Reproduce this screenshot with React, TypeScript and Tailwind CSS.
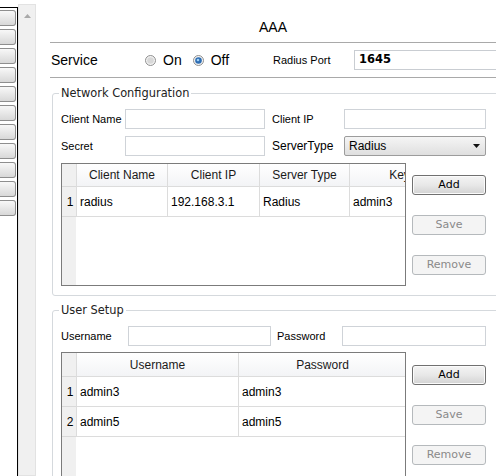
import React from "react";

type Col = { title: string; w: string };

const netCols: Col[] = [
  { title: "Client Name", w: "w-[91px]" },
  { title: "Client IP", w: "w-[92px]" },
  { title: "Server Type", w: "w-[90px]" },
  { title: "Key", w: "w-[100px]" },
];

const netRows = [["radius", "192.168.3.1", "Radius", "admin3"]];

const userCols: Col[] = [
  { title: "Username", w: "w-[162px]" },
  { title: "Password", w: "w-[168px]" },
];

const userRows = [
  ["admin3", "admin3"],
  ["admin5", "admin5"],
];

function Radio({ on }: { on?: boolean }) {
  return (
    <svg width="11" height="11" viewBox="0 0 11 11" className="shrink-0">
      <circle cx="5.5" cy="5.5" r="5" fill="#f3f3f3" stroke="#8f8f8f" />
      <circle cx="5.5" cy="5.5" r="3.3" fill={on ? "#2d6db3" : "#d8d8d8"} />
      {on && <circle cx="5" cy="5" r="1.3" fill="#9fd0f4" />}
    </svg>
  );
}

function Btn({ label, disabled }: { label: string; disabled?: boolean }) {
  return (
    <div
      className={
        disabled
          ? "flex h-[20px] w-[74px] items-center justify-center rounded-[3px] border border-[#b5b9bc] bg-[#f4f4f4] font-['DejaVu_Sans',sans-serif] text-[11px] text-[#8a8a8a]"
          : "flex h-[20px] w-[74px] items-center justify-center rounded-[3px] border border-[#707070] bg-linear-to-b from-[#f4f4f4] via-[#e8e8e8] to-[#d3d3d3] font-['DejaVu_Sans',sans-serif] text-[11px] text-black shadow-[inset_0_0_0_1px_#fbfbfb]"
      }
    >
      {label}
    </div>
  );
}

function Grid({
  cols,
  rows,
  box,
  headH,
}: {
  cols: Col[];
  rows: string[][];
  box: string;
  headH: string;
}) {
  return (
    <div className={`flex shrink-0 overflow-hidden border border-[#7b7b7b] bg-white text-[12px] ${box}`}>
      <div className="flex w-[14px] shrink-0 flex-col bg-[#f0f0f0]">
        <div className={`${headH} border-b border-[#d9d9d9]`} />
        {rows.map((_, i) => (
          <div key={i} className="flex h-[30px] items-center justify-center border-b border-[#d9d9d9] pl-[2px]">
            {i + 1}
          </div>
        ))}
      </div>
      {cols.map((c, ci) => (
        <div key={c.title} className={`flex shrink-0 flex-col ${c.w}`}>
          <div
            className={`${headH} flex items-center justify-center border-b border-l border-[#dcdcdc] bg-linear-to-b from-white to-[#f3f4f6] whitespace-nowrap text-[#1a1a1a]`}
          >
            {c.title}
          </div>
          {rows.map((r, ri) => (
            <div key={ri} className="flex h-[30px] items-center border-b border-l border-[#dcdcdc] pl-[3px] whitespace-nowrap">
              {r[ci]}
            </div>
          ))}
        </div>
      ))}
    </div>
  );
}

export default function App() {
  return (
    <div className="flex h-[476px] w-[496px] overflow-hidden bg-white font-['Liberation_Sans',Arial,sans-serif] text-black">
      {/* side strip */}
      <div className="mt-[7px] flex w-[18px] shrink-0 flex-col gap-[3px] border-t border-r border-black pt-[2px]">
        {Array.from({ length: 11 }).map((_, i) => (
          <div
            key={i}
            className="h-[16px] w-[16px] rounded-r-[3px] border border-l-0 border-[#8e8e8e] bg-linear-to-b from-[#f8f8f8] to-[#d8d8d8]"
          />
        ))}
      </div>
      {/* scrollbar */}
      <div className="mt-[4px] flex w-[18px] shrink-0 justify-center border border-[#e2e2e2] bg-[#f0f0f0] pt-[9px]">
        <svg width="7" height="4" viewBox="0 0 7 4">
          <path d="M0 4L3.5 0L7 4Z" fill="#a9a9a9" />
        </svg>
      </div>

      <div className="w-[460px] shrink-0 pl-[14px]">
        <div className="flex justify-center pt-[19px] pb-[7px] text-[14px] leading-[16px]">AAA</div>

        <div className="flex h-[36px] items-center border-y border-[#a9a9a9]">
          <span className="w-[95px] shrink-0 pl-[1px] text-[14px]">Service</span>
          <div className="flex w-[128px] shrink-0 items-center text-[14px]">
            <Radio />
            <span className="ml-[7px]">On</span>
            <span className="ml-[11px] flex">
              <Radio on />
            </span>
            <span className="ml-[7px]">Off</span>
          </div>
          <span className="w-[81px] shrink-0 text-[11px]">Radius Port</span>
          <div className="flex h-[20px] w-[150px] shrink-0 items-center border border-[#c9cdd2] pl-[4px] font-['DejaVu_Sans',sans-serif] text-[11.5px] font-bold">
            1645
          </div>
        </div>

        <fieldset className="mt-[8px] ml-[2px] w-[470px] rounded-[3px] border border-[#d5d9dd] pt-[9px] pb-[9px] pl-[8px]">
          <legend className="-ml-[2px] px-[2px] font-['DejaVu_Sans',sans-serif] text-[11.4px] leading-[14px] text-[#222]">
            Network Configuration
          </legend>
          <div className="flex h-[20px] items-center text-[11px]">
            <span className="w-[64px] shrink-0">Client Name</span>
            <div className="h-[20px] w-[140px] shrink-0 border border-[#cfd3d8]" />
            <span className="ml-[7px] w-[72px] shrink-0">Client IP</span>
            <div className="h-[20px] w-[142px] shrink-0 border border-[#cfd3d8]" />
          </div>
          <div className="mt-[7px] flex h-[20px] items-center text-[11px]">
            <span className="w-[64px] shrink-0">Secret</span>
            <div className="h-[20px] w-[140px] shrink-0 border border-[#cfd3d8]" />
            <span className="ml-[7px] w-[72px] shrink-0 text-[12px]">ServerType</span>
            <div className="flex h-[20px] w-[142px] shrink-0 items-center justify-between rounded-[2px] border border-[#9c9c9c] bg-linear-to-b from-[#f5f5f5] to-[#dfdfdf] pr-[5px] pl-[4px] text-[12px]">
              <span>Radius</span>
              <svg width="7" height="4" viewBox="0 0 7 4">
                <path d="M0 0H7L3.5 4Z" fill="#111" />
              </svg>
            </div>
          </div>
          <div className="mt-[7px] flex">
            <Grid cols={netCols} rows={netRows} box="h-[123px] w-[345px]" headH="h-[23px]" />
            <div className="ml-[6px] flex flex-col gap-[20px] pt-[12px]">
              <Btn label="Add" />
              <Btn label="Save" disabled />
              <Btn label="Remove" disabled />
            </div>
          </div>
        </fieldset>

        <fieldset className="mt-[7px] ml-[2px] w-[470px] rounded-[3px] border border-[#d5d9dd] pt-[9px] pb-[9px] pl-[8px]">
          <legend className="-ml-[2px] px-[2px] font-['DejaVu_Sans',sans-serif] text-[11.4px] leading-[14px] text-[#222]">
            User Setup
          </legend>
          <div className="flex h-[20px] items-center text-[11px]">
            <span className="w-[67px] shrink-0">Username</span>
            <div className="h-[20px] w-[143px] shrink-0 border border-[#cfd3d8]" />
            <span className="ml-[6px] w-[65px] shrink-0">Password</span>
            <div className="h-[20px] w-[144px] shrink-0 border border-[#cfd3d8]" />
          </div>
          <div className="mt-[6px] flex">
            <Grid cols={userCols} rows={userRows} box="h-[140px] w-[345px]" headH="h-[24px]" />
            <div className="ml-[6px] flex flex-col gap-[20px] pt-[13px]">
              <Btn label="Add" />
              <Btn label="Save" disabled />
              <Btn label="Remove" disabled />
            </div>
          </div>
        </fieldset>
      </div>
    </div>
  );
}
